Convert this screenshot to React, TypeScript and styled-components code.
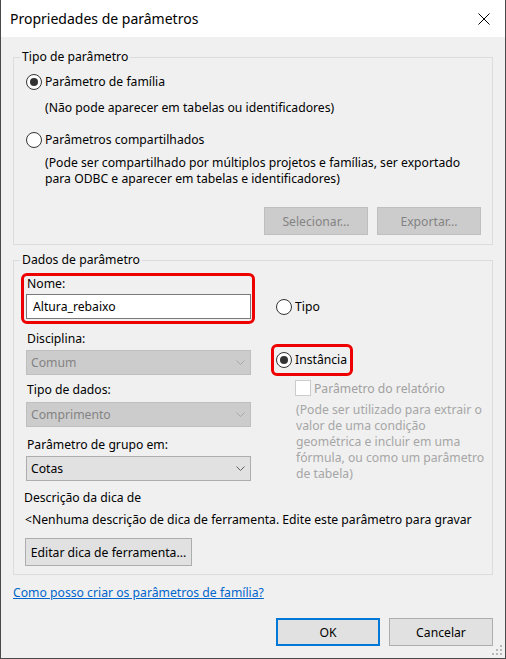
import React from 'react';
import styled, { createGlobalStyle } from 'styled-components';

const GlobalStyle = createGlobalStyle`
  html, body { margin: 0; padding: 0; background: #f0f0f0; }
  body {
    font-family: "Noto Sans", "Open Sans", sans-serif;
    font-size: 12.2px;
    color: #000;
  }
  * { box-sizing: border-box; }
`;

const Window = styled.div`
  position: relative;
  width: 506px;
  height: 659px;
  background: #f0f0f0;
  border: 1px solid #4a4a4a;
  border-top: none;
  display: flex;
  flex-direction: column;
`;

const TitleBar = styled.div`
  height: 37px;
  flex: none;
  background: #fff;
  display: flex;
  align-items: center;
  justify-content: space-between;
  padding: 0 15px 0 9px;
`;

const Title = styled.div`
  font-size: 14px;
  line-height: 20px;
  padding-top: 1px;
`;

const CloseIcon = styled.svg`
  width: 12px;
  height: 12px;
  display: block;
`;

const Body = styled.div`
  flex: 1;
  display: flex;
  flex-direction: column;
  padding: 20px 12px 0 12px;
`;

const GroupBox = styled.div<{ $mt?: number }>`
  border: 1px solid #dcdcdc;
  display: flex;
  flex-direction: column;
  margin-top: ${(p) => p.$mt ?? 0}px;
  padding: 0 11px ${(p) => (p.$mt ? 8 : 9)}px 12px;
`;

const Legend = styled.div`
  align-self: flex-start;
  margin: -9px 0 0 -6px;
  padding: 0 2px;
  background: #f0f0f0;
  line-height: 16px;
`;

const RadioRow = styled.label<{ $mt?: number; $ml?: number }>`
  display: flex;
  align-items: center;
  gap: 3px;
  height: 16px;
  line-height: 16px;
  margin-top: ${(p) => p.$mt ?? 0}px;
  margin-left: ${(p) => p.$ml ?? 0}px;
`;

const RadioCircle = styled.span<{ $checked?: boolean }>`
  position: relative;
  width: 16px;
  height: 16px;
  flex: none;
  border-radius: 50%;
  border: 1px solid #333;
  background: #fff;
  &::after {
    content: '';
    display: ${(p) => (p.$checked ? 'block' : 'none')};
    position: absolute;
    left: 3px;
    top: 3px;
    width: 8px;
    height: 8px;
    border-radius: 50%;
    background: #333;
  }
`;

const Desc = styled.div<{ $mt: number }>`
  margin-top: ${(p) => p.$mt}px;
  padding-left: 19px;
  line-height: 16px;
`;

const ButtonRow = styled.div<{ $mt: number; $align?: 'start' | 'end'; $ml?: number }>`
  display: flex;
  justify-content: ${(p) => (p.$align === 'start' ? 'flex-start' : 'flex-end')};
  gap: 9px;
  margin-top: ${(p) => p.$mt}px;
  margin-left: ${(p) => p.$ml ?? 0}px;
`;

const Button = styled.button<{ $variant?: 'disabled' | 'default' | 'primary'; $w?: number }>`
  width: ${(p) => p.$w ?? 104}px;
  height: 28px;
  padding: 0;
  font-family: inherit;
  font-size: 12.2px;
  background: ${(p) => (p.$variant === 'disabled' ? '#cccccc' : '#e1e1e1')};
  color: ${(p) => (p.$variant === 'disabled' ? '#838383' : '#000')};
  border: ${(p) =>
    p.$variant === 'disabled'
      ? '1px solid #bfbfbf'
      : p.$variant === 'primary'
      ? '2px solid #0078d7'
      : '1px solid #adadad'};
  border-radius: 0;
  flex: none;
`;

const TopSection = styled.div`
  display: flex;
  margin-top: 5px;
`;

const LeftCol = styled.div`
  width: 225px;
  flex: none;
  display: flex;
  flex-direction: column;
`;

const RightCol = styled.div`
  margin-left: 20px;
  display: flex;
  flex-direction: column;
`;

const HighlightBox = styled.div`
  border: 3px solid #ee0000;
  border-radius: 6px;
`;

const NameBox = styled(HighlightBox)`
  margin: 0 -4px 0 -5px;
  padding: 0 1px 2px 2px;
  display: flex;
  flex-direction: column;
`;

const InstBox = styled(HighlightBox)`
  align-self: flex-start;
  margin-top: 29px;
  padding: 5px 3px 5px 2px;
`;

const FieldLabel = styled.div<{ $mt?: number }>`
  line-height: 16px;
  padding-left: 1px;
  margin-top: ${(p) => p.$mt ?? 0}px;
`;

const TextInput = styled.input`
  margin-top: 2px;
  width: 225px;
  height: 25px;
  border: 1px solid #7a7a7a;
  background: #fff;
  padding: 0 6px;
  font-family: inherit;
  font-size: 12.2px;
  color: #000;
  outline: none;
`;

const Combo = styled.div<{ $disabled?: boolean; $mt: number }>`
  margin-top: ${(p) => p.$mt}px;
  height: 25px;
  display: flex;
  align-items: center;
  justify-content: space-between;
  padding: 0 5px 0 4px;
  background: ${(p) => (p.$disabled ? '#cccccc' : '#e1e1e1')};
  border: 1px solid ${(p) => (p.$disabled ? '#bfbfbf' : '#adadad')};
  color: ${(p) => (p.$disabled ? '#838383' : '#000')};
`;

const Chevron = styled.svg`
  width: 9px;
  height: 5px;
  display: block;
`;

const CheckRow = styled.label`
  display: flex;
  align-items: center;
  gap: 3px;
  margin-top: 4px;
  margin-left: 24px;
  height: 16px;
  color: #a0a0a0;
`;

const CheckBox = styled.span`
  width: 16px;
  height: 16px;
  flex: none;
  border: 1px solid #cccccc;
  background: #fff;
`;

const Note = styled.div`
  margin-top: 6px;
  margin-left: 25px;
  line-height: 16px;
  color: #a6a6a6;
  white-space: nowrap;
`;

const PlainLine = styled.div<{ $mt: number; $ml: number }>`
  margin-top: ${(p) => p.$mt}px;
  margin-left: ${(p) => p.$ml}px;
  line-height: 16px;
  white-space: nowrap;
  overflow: hidden;
`;

const HelpLink = styled.a`
  align-self: flex-start;
  margin-top: 10px;
  line-height: 16px;
  color: #0066cc;
  text-decoration: underline;
`;

const Footer = styled.div`
  display: flex;
  justify-content: flex-end;
  gap: 9px;
  margin-top: 17px;
`;

const Grip = styled.svg`
  position: absolute;
  right: 2px;
  bottom: 2px;
  width: 12px;
  height: 12px;
`;

const Radio = ({ checked, children, mt, ml }: { checked?: boolean; children: React.ReactNode; mt?: number; ml?: number }) => (
  <RadioRow $mt={mt} $ml={ml}>
    <RadioCircle $checked={checked} />
    <span>{children}</span>
  </RadioRow>
);

const ComboBox = ({ value, disabled, mt }: { value: string; disabled?: boolean; mt: number }) => (
  <Combo $disabled={disabled} $mt={mt}>
    <span>{value}</span>
    <Chevron viewBox="0 0 9 5">
      <polyline points="0.5,0.5 4.5,4.5 8.5,0.5" fill="none" stroke={disabled ? '#a8a8a8' : '#606060'} strokeWidth="1" />
    </Chevron>
  </Combo>
);

export default function App() {
  const gripDots = [
    [8, 0],
    [4, 4],
    [8, 4],
    [0, 8],
    [4, 8],
    [8, 8],
  ];
  return (
    <>
      <GlobalStyle />
      <Window>
        <TitleBar>
          <Title>Propriedades de parâmetros</Title>
          <CloseIcon viewBox="0 0 12 12">
            <path d="M0.5 0.5 L11.5 11.5 M11.5 0.5 L0.5 11.5" stroke="#000" strokeWidth="1" fill="none" />
          </CloseIcon>
        </TitleBar>
        <Body>
          <GroupBox>
            <Legend>Tipo de parâmetro</Legend>
            <Radio checked mt={9}>Parâmetro de família</Radio>
            <Desc $mt={10}>(Não pode aparecer em tabelas ou identificadores)</Desc>
            <Radio mt={16}>Parâmetros compartilhados</Radio>
            <Desc $mt={7}>
              (Pode ser compartilhado por múltiplos projetos e famílias, ser exportado
              <br />
              para ODBC e aparecer em tabelas e identificadores)
            </Desc>
            <ButtonRow $mt={20}>
              <Button $variant="disabled">Selecionar...</Button>
              <Button $variant="disabled">Exportar...</Button>
            </ButtonRow>
          </GroupBox>

          <GroupBox $mt={15}>
            <Legend>Dados de parâmetro</Legend>
            <TopSection>
              <LeftCol>
                <NameBox>
                  <FieldLabel>Nome:</FieldLabel>
                  <TextInput defaultValue="Altura_rebaixo" readOnly />
                </NameBox>
                <FieldLabel $mt={7}>Disciplina:</FieldLabel>
                <ComboBox value="Comum" disabled mt={3} />
                <FieldLabel $mt={7}>Tipo de dados:</FieldLabel>
                <ComboBox value="Comprimento" disabled mt={4} />
                <FieldLabel $mt={10}>Parâmetro de grupo em:</FieldLabel>
                <ComboBox value="Cotas" mt={3} />
              </LeftCol>
              <RightCol>
                <Radio mt={26} ml={5}>Tipo</Radio>
                <InstBox>
                  <Radio checked>Instância</Radio>
                </InstBox>
                <CheckRow>
                  <CheckBox />
                  <span>Parâmetro do relatório</span>
                </CheckRow>
                <Note>
                  (Pode ser utilizado para extrair o<br />
                  valor de uma condição<br />
                  geométrica e incluir em uma<br />
                  fórmula, ou como um parâmetro<br />
                  de tabela)
                </Note>
              </RightCol>
            </TopSection>
            <PlainLine $mt={8} $ml={-2}>Descrição da dica de</PlainLine>
            <PlainLine $mt={6} $ml={-1}>
              &lt;Nenhuma descrição de dica de ferramenta. Edite este parâmetro para gravar
            </PlainLine>
            <ButtonRow $mt={10} $align="start" $ml={-1}>
              <Button $w={167}>Editar dica de ferramenta...</Button>
            </ButtonRow>
          </GroupBox>

          <HelpLink href="#">Como posso criar os parâmetros de família?</HelpLink>

          <Footer>
            <Button $variant="primary">OK</Button>
            <Button>Cancelar</Button>
          </Footer>
        </Body>
        <Grip viewBox="0 0 12 12">
          {gripDots.map(([x, y]) => (
            <rect key={`${x}-${y}`} x={x + 1} y={y + 1} width="2" height="2" fill="#b8b8b8" />
          ))}
        </Grip>
      </Window>
    </>
  );
}
